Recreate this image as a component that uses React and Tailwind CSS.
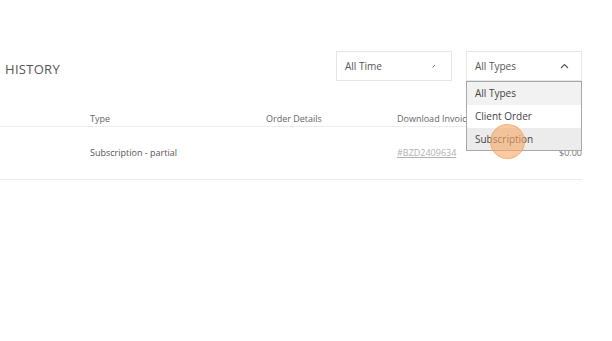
import React from 'react';

const font = { fontFamily: '"Open Sans", "Liberation Sans", sans-serif' };

const SelectBox = ({ label, open, children }) => (
  <div className="relative w-[116px]">
    <div className="h-[30px] flex items-center justify-between border border-[#e6e6e6] bg-white pl-[8px] pr-[10px] text-[10px] text-[#555]">
      <span>{label}</span>
      {open ? (
        <svg width="9" height="6" viewBox="0 0 9 6" className="mr-[2px]">
          <path d="M1 5 L4.5 1.5 L8 5" fill="none" stroke="#555" strokeWidth="1.1" />
        </svg>
      ) : (
        <svg width="6" height="6" viewBox="0 0 6 6" className="mr-[4px]">
          <path d="M1.5 4.5 L4 2" fill="none" stroke="#777" strokeWidth="1" />
        </svg>
      )}
    </div>
    {children}
  </div>
);

export default function App() {
  return (
    <div className="w-[612px] h-[341px] bg-white overflow-hidden" style={font}>
      <div className="w-[582px]">
        <div className="flex items-center justify-between pt-[51px] h-[81px]">
          <h2 className="pl-[5px] pt-[8px] text-[13px] tracking-[0.3px] text-[#555] uppercase">History</h2>
          <div className="flex gap-[14px] self-start">
            <SelectBox label="All Time" />
            <SelectBox label="All Types" open>
              <div className="absolute left-0 top-[30px] z-10 w-[116px] border border-[#a8a8a8] bg-white text-[10px] text-[#444]">
                <div className="h-[23px] flex items-center pl-[8px] bg-[#f2f2f2]">All Types</div>
                <div className="h-[23px] flex items-center pl-[8px] bg-white">Client Order</div>
                <div className="h-[22px] flex items-center pl-[8px] bg-[#ececec]">Subscription</div>
                <div className="absolute left-[23px] top-[42px] w-[35px] h-[35px] rounded-full bg-[#f7a864]/60 border border-[#f39a50]/50"></div>
              </div>
            </SelectBox>
          </div>
        </div>

        <div className="grid grid-cols-[90px_176px_131px_1fr] mt-[26px] pt-[5px] text-[9px] text-[#666] border-b border-[#ececec] h-[20px]">
          <div></div>
          <div>Type</div>
          <div>Order Details</div>
          <div>Download Invoice</div>
        </div>
        <div className="grid grid-cols-[90px_176px_131px_1fr] items-center h-[53px] text-[9px] text-[#555] border-b border-[#ececec]">
          <div className="ml-[-5px] text-[#6b84a8]">4</div>
          <div>Subscription - partial</div>
          <div></div>
          <div className="flex justify-between">
            <a className="underline text-[#b0b0b0]">#BZD2409634</a>
            <span className="text-[#777]">$0.00</span>
          </div>
        </div>
      </div>
    </div>
  );
}
